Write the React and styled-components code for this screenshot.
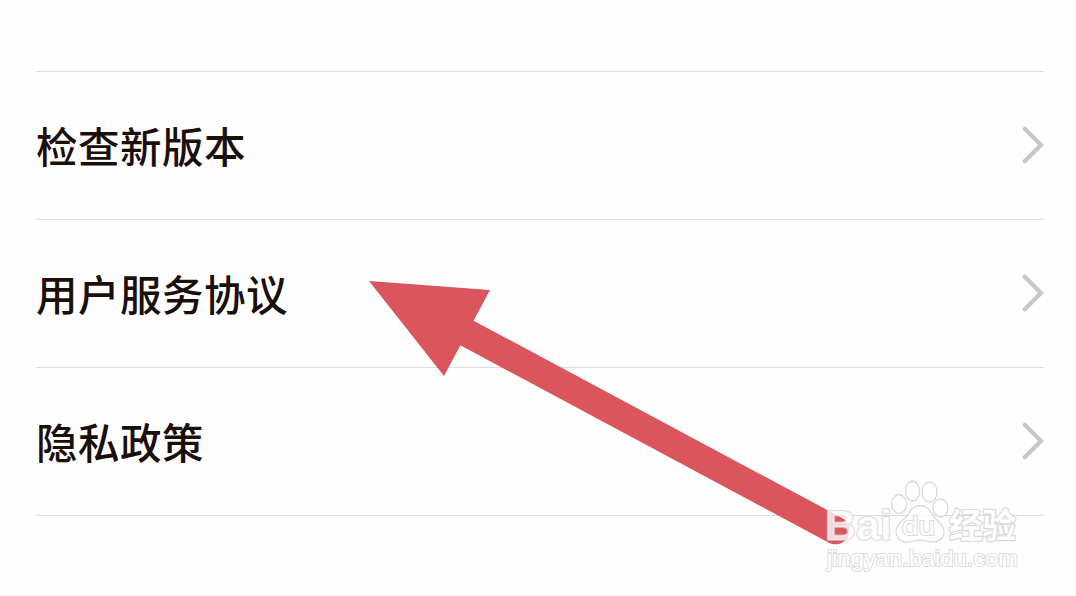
import React from "react";
import styled, { createGlobalStyle } from "styled-components";

const GlobalStyle = createGlobalStyle`
  body {
    margin: 0;
    background: #fefefe;
    font-family: "Noto Sans CJK SC", sans-serif;
  }
`;

const Screen = styled.main`
  position: relative;
  box-sizing: border-box;
  width: 1076px;
  height: 596px;
  padding: 71px 32px 0 36px;
  overflow: hidden;
`;

const List = styled.ul`
  margin: 0;
  padding: 0;
  list-style: none;
  border-top: 1px solid #dcdcdc;
`;

const Row = styled.li`
  box-sizing: border-box;
  display: flex;
  align-items: center;
  justify-content: space-between;
  height: 148px;
  padding-bottom: 3px;
  border-bottom: 1px solid #dcdcdc;
`;

const Label = styled.span`
  padding-top: 2px;
  font-size: 41.5px;
  font-weight: 500;
  line-height: 60px;
  letter-spacing: 0.5px;
  color: #1b0f0b;
`;

const Chevron = styled.svg`
  width: 24px;
  height: 40px;
  fill: none;
  stroke: #c8c8c8;
  stroke-width: 4.4;
  stroke-linecap: round;
`;

const Pointer = styled.svg`
  position: absolute;
  top: 270px;
  left: 360px;
  width: 500px;
  height: 286px;
`;

const Watermark = styled.svg`
  position: absolute;
  top: 470px;
  left: 810px;
  width: 220px;
  height: 110px;
  fill: rgba(255, 255, 255, 0.78);
  stroke: #d9d9d9;
  stroke-width: 1.3;
`;

const Brand = styled.text`
  font-family: "Liberation Sans", sans-serif;
  font-size: 43px;
  font-weight: 700;
  fill: rgba(255, 255, 255, 0.8);
  stroke: rgba(205, 205, 205, 0.7);
  stroke-width: 2;
  paint-order: stroke;
`;

const BrandSmall = styled(Brand)`
  font-size: 25px;
  font-weight: 400;
  fill: #fefefe;
`;

const BrandHan = styled(Brand)`
  font-family: "Noto Sans CJK SC", sans-serif;
  font-size: 34px;
  fill: #fefefe;
  stroke: #dadada;
  stroke-width: 2.4;
`;

const Site = styled.text`
  font-family: "Liberation Sans", sans-serif;
  font-size: 22px;
  fill: #fefefe;
  stroke: #dedede;
  stroke-width: 2;
  paint-order: stroke;
`;

const items = ["检查新版本", "用户服务协议", "隐私政策"];

function App() {
  return (
    <>
      <GlobalStyle />
      <Screen>
        <List>
          {items.map((item) => (
            <Row key={item}>
              <Label>{item}</Label>
              <Chevron viewBox="0 0 24 40">
                <path d="M4.8 4.7 L21 21 L4.8 37.3" />
              </Chevron>
            </Row>
          ))}
        </List>
        <Pointer viewBox="360 270 500 286">
          <path d="M467 333 L835.5 530.3" stroke="#da565c" strokeWidth="28" strokeLinecap="round" />
          <path d="M369 281 L490 290 L444 376 Z" fill="#da565c" />
        </Pointer>
        <Watermark viewBox="810 470 220 110">
          <Brand x="825" y="540" textLength="67" lengthAdjust="spacingAndGlyphs">Bai</Brand>
          <ellipse cx="899" cy="504" rx="7.5" ry="9.5" />
          <ellipse cx="912.5" cy="491" rx="7" ry="10" />
          <ellipse cx="929.5" cy="492" rx="7.5" ry="10" />
          <ellipse cx="940.5" cy="508" rx="7.5" ry="9" />
          <path d="M920 505.5 C927 505.5 930 511 934 517 C938 521 944 525 944 532 C944 538 939 542 933 542 C927 542 925 540 920 540 C914 540 911 542 906 542 C900 542 896 537 896 531 C896 524 903 521 907 516 C911 510 913 505.5 920 505.5 Z" />
          <BrandSmall x="902" y="534.5" textLength="33" lengthAdjust="spacingAndGlyphs">du</BrandSmall>
          <BrandHan x="949" y="538" textLength="67" lengthAdjust="spacingAndGlyphs">经验</BrandHan>
          <Site x="827" y="566" textLength="191" lengthAdjust="spacingAndGlyphs">jingyan.baidu.com</Site>
        </Watermark>
      </Screen>
    </>
  );
}

export default App;
